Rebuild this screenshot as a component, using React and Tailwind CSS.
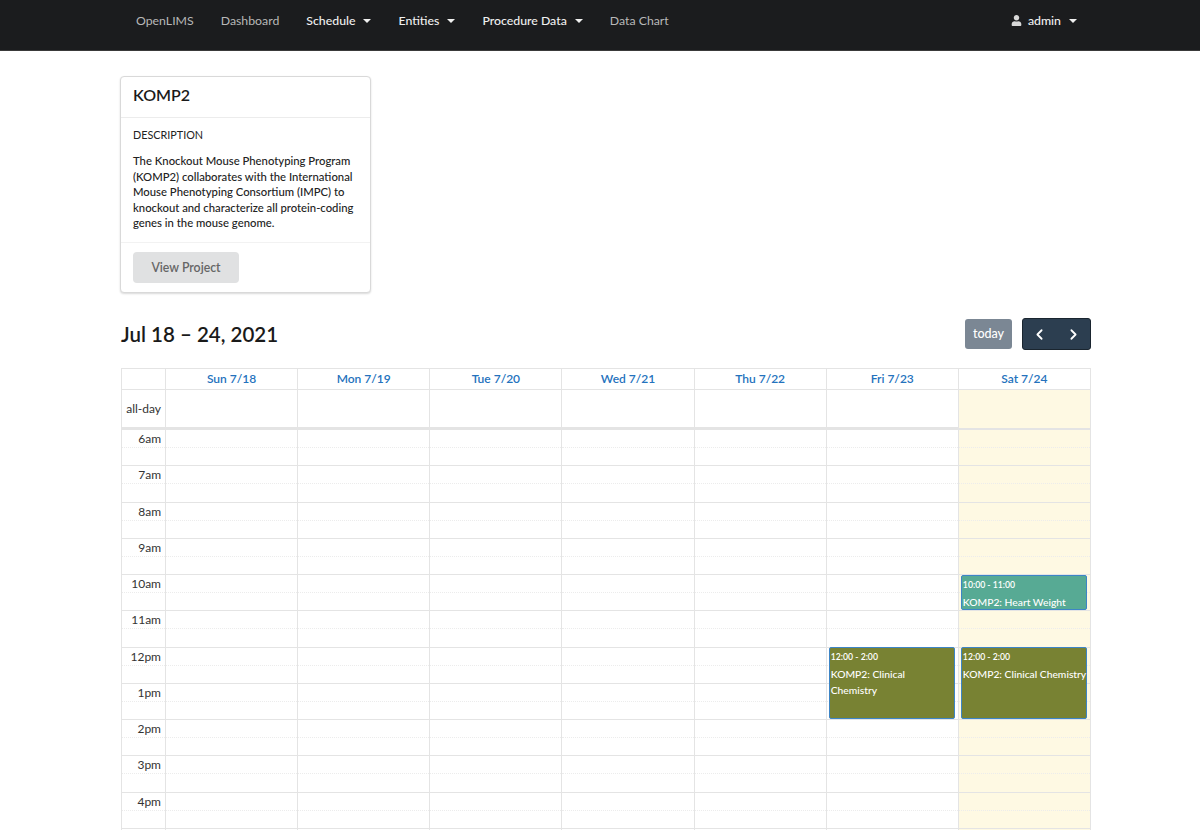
import React from 'react';
import { ChevronLeft, ChevronRight } from 'lucide-react';
import { FaUser } from 'react-icons/fa';

const days = ['Sun 7/18', 'Mon 7/19', 'Tue 7/20', 'Wed 7/21', 'Thu 7/22', 'Fri 7/23', 'Sat 7/24'];
// the last row is cut off by the window, so it shows no label
const hours = ['6am', '7am', '8am', '9am', '10am', '11am', '12pm', '1pm', '2pm', '3pm', '4pm', ''];

// hour + day index -> event that starts in that slot
const events = {
  '10am-6': { time: '10:00 - 11:00', title: 'KOMP2: Heart Weight', color: 'bg-[#57aa94]', box: 'top-0 h-[35px]' },
  '12pm-5': { time: '12:00 - 2:00', title: 'KOMP2: Clinical Chemistry', color: 'bg-[#788233]', box: '-top-px h-[72px]' },
  '12pm-6': { time: '12:00 - 2:00', title: 'KOMP2: Clinical Chemistry', color: 'bg-[#788233]', box: '-top-px h-[72px]', nowrap: true },
};

const Caret = () => (
  <span className="ml-[8px] inline-block h-0 w-0 border-x-[4px] border-t-[4px] border-x-transparent border-t-current" />
);

const NavItem = ({ label, bright, caret }) => (
  <span className={`flex items-center ${bright ? 'font-medium text-[#f0f0f0]' : 'text-[#b8b8b8]'}`}>
    {label}
    {caret && <Caret />}
  </span>
);

const Navbar = () => (
  <nav className="flex h-[51px] items-start justify-between border-b border-[#3a3a3a] bg-[#1b1c1e] pl-[136px] pr-[123px] pt-[13px] text-[12.3px] leading-[15px]">
    <div className="flex gap-[27px]">
      <NavItem label="OpenLIMS" />
      <NavItem label="Dashboard" />
      <NavItem label="Schedule" bright caret />
      <NavItem label="Entities" bright caret />
      <NavItem label="Procedure Data" bright caret />
      <NavItem label="Data Chart" />
    </div>
    <span className="flex items-center font-medium text-[#f0f0f0]">
      <FaUser className="mr-[6px] text-[#d8d8d8]" size={11} />
      admin
      <Caret />
    </span>
  </nav>
);

const ProjectCard = () => (
  <div className="ml-[120px] mt-[25px] w-[251px] rounded-[4px] border border-[#d9d9d9] bg-white shadow-[0_1px_2px_rgba(0,0,0,0.15)]">
    <div className="h-[41px] border-b border-[#ececec] px-[12px] pt-[8px] text-[16px] font-semibold leading-[20px] text-[#1a1a1a]">
      KOMP2
    </div>
    <div className="h-[125px] border-b border-[#f2f2f2] px-[12px] pt-[10px] text-[#222]">
      <div className="text-[10.8px] leading-[14px]">DESCRIPTION</div>
      <p className="mt-[11px] text-[11.3px] font-medium leading-[15.6px]">
        The Knockout Mouse Phenotyping Program (KOMP2) collaborates with the International Mouse Phenotyping Consortium (IMPC) to knockout and characterize all protein-coding genes in the mouse genome.
      </p>
    </div>
    <div className="h-[49px] px-[12px] pt-[9px]">
      <button className="h-[31px] w-[106px] rounded-[4px] bg-[#e0e1e2] pt-[2px] text-[12.3px] font-semibold text-[#666]">
        View Project
      </button>
    </div>
  </div>
);

const Toolbar = () => (
  <div className="ml-[121px] mr-[109px] mt-[25px] flex h-[32px] items-center justify-between">
    <h2 className="text-[20.5px] font-semibold text-[#1a1a1a]">Jul 18 – 24, 2021</h2>
    <div className="flex items-center gap-[10px]">
      <button className="h-[30px] w-[47px] rounded-[3px] bg-[#7b8794] text-[12.5px] font-medium text-white">today</button>
      <div className="flex h-[32px] w-[69px] items-center justify-around rounded-[3px] border border-[#1a252f] bg-[#2c3e50] text-white">
        <ChevronLeft size={17} strokeWidth={2.5} />
        <ChevronRight size={17} strokeWidth={2.5} />
      </div>
    </div>
  </div>
);

const Event = ({ event }) => (
  <div className={`absolute left-[2px] right-[3px] z-10 rounded-[2px] border border-[#3d85c6] px-[1px] text-white ${event.color} ${event.box}`}>
    <div className="text-[8.7px] font-semibold leading-[18px]">{event.time}</div>
    <div className={`text-[10.3px] font-medium leading-[16.5px] ${event.nowrap ? 'whitespace-nowrap' : 'pr-[12px]'}`}>{event.title}</div>
  </div>
);

const Calendar = () => (
  <div className="ml-[121px] mr-[109px] mt-[18px] border-l border-r border-t border-[#e4e4e4]">
    <div className="grid h-[21px] grid-cols-[43px_repeat(7,1fr)] border-b border-[#e4e4e4]">
      <div />
      {days.map((d) => (
        <div key={d} className="border-l border-[#e4e4e4] text-center text-[12px] font-semibold leading-[20px] text-[#2472bd]">{d}</div>
      ))}
    </div>
    <div className="grid h-[40px] grid-cols-[43px_repeat(7,1fr)] border-b-[3px] border-[#e4e4e4]">
      <div className="pr-[4px] text-right text-[12px] leading-[38px] text-[#333]">all-day</div>
      {days.map((d, i) => (
        <div key={d} className={`border-l border-[#e4e4e4] ${i === 6 ? 'bg-[#fef9e3]' : ''}`} />
      ))}
    </div>
    {hours.map((h, rowIndex) => (
      <div key={rowIndex} className="grid h-[36.25px] grid-cols-[43px_repeat(7,1fr)] border-b border-[#e4e4e4]">
        <div className="h-[18px] border-b border-dotted border-[#ececec] pr-[4px] text-right text-[12px] leading-[18px] text-[#333]">{h}</div>
        {days.map((d, i) => (
          <div key={d} className={`relative border-l border-[#e4e4e4] ${i === 6 ? 'bg-[#fef9e3]' : ''}`}>
            <div className="h-[18px] border-b border-dotted border-[#ececec]" />
            {events[`${h}-${i}`] && <Event event={events[`${h}-${i}`]} />}
          </div>
        ))}
      </div>
    ))}
  </div>
);

const App = () => (
  <div className="h-[830px] overflow-hidden bg-white font-['Lato','Open_Sans',sans-serif]">
    <Navbar />
    <ProjectCard />
    <Toolbar />
    <Calendar />
  </div>
);

export default App;
